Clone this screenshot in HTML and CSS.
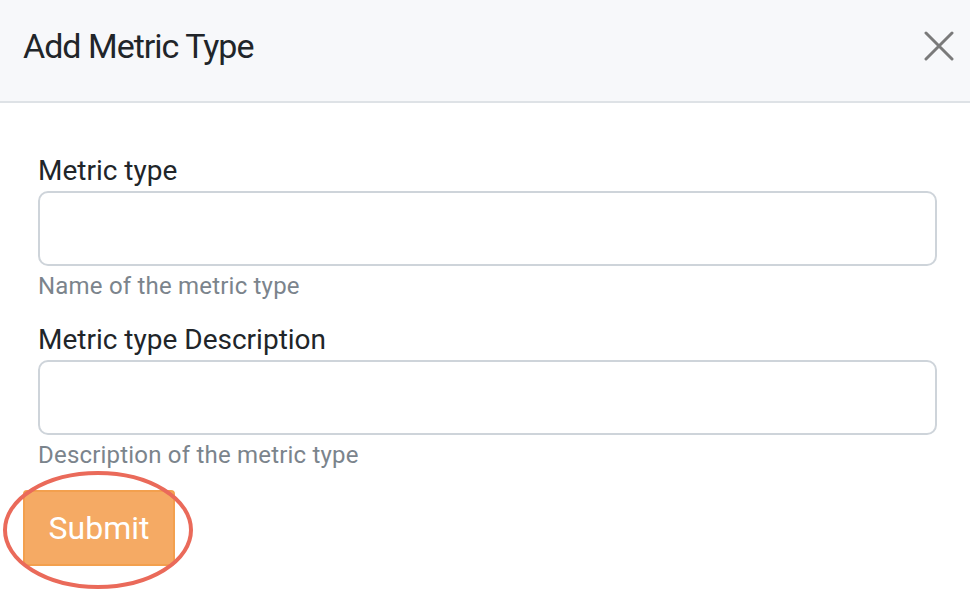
FILE: index.html
```html
<!DOCTYPE html>
<html>
<head>
<meta charset="utf-8">
<link rel="stylesheet" href="styles.css">
</head>
<body>
<div class="modal">
  <div class="modal-header">
    <h1 class="title">Add Metric Type</h1>
    <button class="close" aria-label="Close">
      <svg width="30" height="30" viewBox="0 0 30 30"><path d="M2 2 L28 28 M28 2 L2 28" stroke="#7a7a7a" stroke-width="3" stroke-linecap="round" fill="none"/></svg>
    </button>
  </div>
  <div class="modal-body">
    <div class="field">
      <label class="label">Metric type</label>
      <div class="input"></div>
      <div class="help">Name of the metric type</div>
    </div>
    <div class="field">
      <label class="label">Metric type Description</label>
      <div class="input"></div>
      <div class="help">Description of the metric type</div>
    </div>
    <div class="actions">
      <button class="btn">Submit</button>
      <svg class="ring" width="196" height="124" viewBox="0 0 196 124"><ellipse cx="98" cy="62" rx="93" ry="57" fill="none" stroke="#ea6a5a" stroke-width="4"/></svg>
    </div>
  </div>
</div>
</body>
</html>
```
FILE: styles.css
```css
html, body { margin: 0; padding: 0; background: #fff; }
body { font-family: Roboto, "Liberation Sans", sans-serif; color: #212529; width: 970px; height: 590px; overflow: hidden; }
.modal { width: 970px; }
.modal-header {
  height: 91px;
  background: #f7f8fa;
  border-bottom: 2px solid #dee2e6;
  display: flex;
  align-items: center;
  justify-content: space-between;
  padding: 0 16px 10px 23px;
  box-sizing: content-box;
}
.title { margin: 0; font-family: Roboto, "Liberation Sans", sans-serif; font-weight: 400; font-size: 34px; letter-spacing: -1px; color: #212529; line-height: 40px; }
.close { border: 0; background: none; padding: 0; width: 30px; height: 30px; display: flex; }
.modal-body { padding: 50px 33px 0 38px; }
.field { display: flex; flex-direction: column; }
.field + .field { margin-top: 22px; }
.label { font-size: 28px; line-height: 36px; color: #212529; margin-bottom: 2px; }
.input { height: 71px; border: 2px solid #ced4da; border-radius: 10px; background: #fff; }
.help { font-size: 24px; letter-spacing: 0.2px; line-height: 28px; margin-top: 6px; color: #7b848c; }
.actions { position: relative; margin-top: 21px; margin-left: -15px; height: 80px; }
.btn {
  width: 152px; height: 76px;
  background: #f5aa64;
  border: 2px solid #f3a04e;
  border-radius: 4px;
  color: #fff;
  font-family: Roboto, "Liberation Sans", sans-serif;
  font-size: 32px;
  padding: 0;
}
.ring { position: absolute; left: -23px; top: -22px; }
```
